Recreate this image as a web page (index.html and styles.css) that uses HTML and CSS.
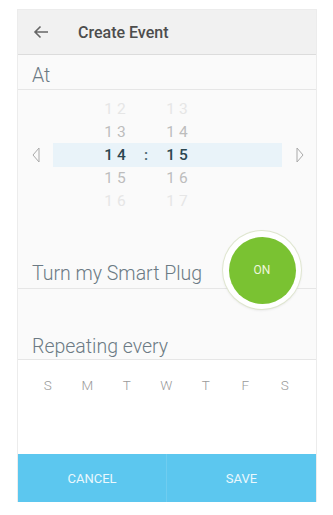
FILE: index.html
```html
<!DOCTYPE html>
<html>
<head>
<meta charset="utf-8">
<link rel="stylesheet" href="styles.css">
</head>
<body>
<div class="phone">
  <div class="header">
    <svg class="back" width="16" height="14" viewBox="0 0 16 14"><path d="M15 7H2M7.5 1.5L2 7l5.5 5.5" fill="none" stroke="#666" stroke-width="1.6"/></svg>
    <span class="title">Create Event</span>
  </div>
  <div class="row at">At</div>
  <div class="picker">
    <div class="prow f2"><span></span><div class="band"><span>12</span><span></span><span>13</span></div><span></span></div>
    <div class="prow f1"><span></span><div class="band"><span>13</span><span></span><span>14</span></div><span></span></div>
    <div class="prow sel">
      <span class="arrow"><svg width="8" height="16" viewBox="0 0 8 16"><path d="M7 1L1 8l6 7z" fill="none" stroke="#aaa" stroke-width="1"/></svg></span>
      <div class="band"><span>14</span><span class="colon">:</span><span>15</span></div>
      <span class="arrow"><svg width="8" height="16" viewBox="0 0 8 16"><path d="M1 1l6 7-6 7z" fill="none" stroke="#aaa" stroke-width="1"/></svg></span>
    </div>
    <div class="prow f1"><span></span><div class="band"><span>15</span><span></span><span>16</span></div><span></span></div>
    <div class="prow f2"><span></span><div class="band"><span>16</span><span></span><span>17</span></div><span></span></div>
  </div>
  <div class="row smart">
    <span>Turn my Smart Plug</span>
    <div class="toggle"><div class="knob">ON</div></div>
  </div>
  <div class="row repeat">Repeating every</div>
  <div class="days">
    <span>S</span><span>M</span><span>T</span><span>W</span><span>T</span><span>F</span><span>S</span>
  </div>
  <div class="actions">
    <div class="btn cancel">CANCEL</div>
    <div class="btn">SAVE</div>
  </div>
</div>
</body>
</html>
```
FILE: styles.css
```css
html, body {
  margin: 0;
  padding: 0;
  background: #ffffff;
}
body {
  font-family: Roboto, "Noto Sans", sans-serif;
}
.phone {
  margin: 10px 0 0 18px;
  width: 298px;
  height: 492px;
  background: #fafafa;
  display: flex;
  flex-direction: column;
  box-shadow: 0 0 0 1px #ececec;
}
.header {
  height: 44px;
  background: #f1f1f1;
  border-bottom: 1px solid #dcdcdc;
  display: flex;
  align-items: center;
}
.back {
  margin-left: 15px;
}
.title {
  margin-left: 29px;
  font-size: 16px;
  font-weight: 500;
  color: #4d4d4d;
}
.row {
  border-bottom: 1px solid #e6e6e6;
  color: #6c7a84;
  font-weight: 300;
  font-size: 19.5px;
  padding-left: 14px;
  box-sizing: border-box;
}
.at {
  height: 35px;
  display: flex;
  align-items: flex-end;
  padding-bottom: 2px;
}
.picker {
  height: 115px;
  padding-top: 7px;
  box-sizing: border-box;
}
.prow {
  height: 23px;
  display: grid;
  grid-template-columns: 35px 229px 34px;
  align-items: center;
}
.band {
  height: 23px;
  display: grid;
  grid-template-columns: 44px 36px 26px 36px;
  align-items: center;
  font-size: 15.5px;
  letter-spacing: 4px;
}
.band span:first-child { grid-column: 2; }
.band span { text-align: center; padding-left: 4px; }
.f2 .band { color: #e6e6e6; }
.f1 .band { color: #bdbdbd; }
.sel .band {
  background: #e9f3f9;
  color: #2b4651;
  font-weight: 500;
  height: 24px;
}
.colon { color: #4c6670; }
.arrow {
  display: flex;
  align-items: center;
  justify-content: flex-start;
  padding-left: 14px;
}
.smart {
  height: 84px;
  position: relative;
  display: flex;
  align-items: flex-end;
  padding-bottom: 3px;
}
.toggle {
  position: absolute;
  left: 205px;
  top: 26px;
  width: 78px;
  height: 78px;
  border-radius: 50%;
  background: #ffffff;
  box-shadow: 0 0 0 1px #dfe6cf, 0 1px 3px rgba(0,0,0,0.12);
  display: flex;
  align-items: center;
  justify-content: center;
}
.knob {
  width: 67px;
  height: 67px;
  border-radius: 50%;
  background: #7ac232;
  color: #eef7dc;
  font-size: 12px;
  font-weight: 400;
  display: flex;
  align-items: center;
  justify-content: center;
}
.repeat {
  height: 71px;
  display: flex;
  align-items: flex-end;
  padding-bottom: 1px;
}
.days {
  flex: 1;
  display: grid;
  grid-template-columns: repeat(7, 39.5px);
  padding-left: 10px;
  padding-top: 17px;
  box-sizing: border-box;
  background: #ffffff;
  font-size: 13.5px;
  color: #9a9a9a;
  font-weight: 300;
}
.days span { text-align: center; }
.actions {
  height: 48px;
  background: #5cc7ef;
  display: grid;
  grid-template-columns: 149px 149px;
}
.btn {
  display: flex;
  align-items: center;
  justify-content: center;
  color: #eaf8fd;
  font-size: 13px;
}
.cancel { border-right: 1px solid #6fcdf0; }
```
